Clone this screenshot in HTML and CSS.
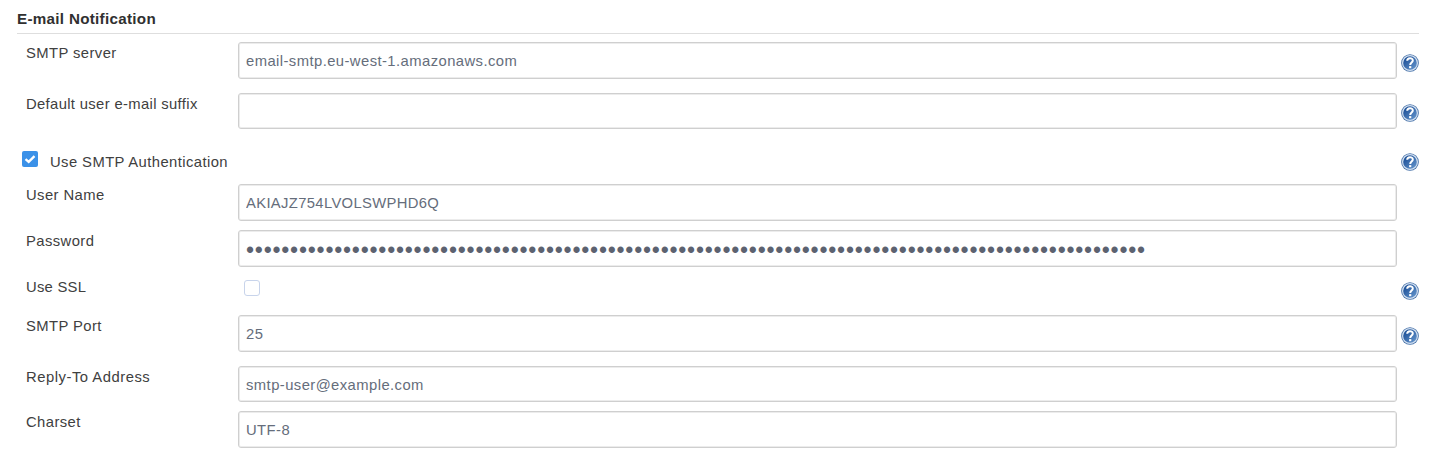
FILE: index.html
```html
<!DOCTYPE html>
<html lang="en">
<head>
<meta charset="utf-8">
<title>E-mail Notification</title>
<link rel="stylesheet" href="styles.css">
</head>
<body>
<svg width="0" height="0" class="defs">
  <defs>
    <linearGradient id="blue" x1="0" y1="0" x2="1" y2="1">
      <stop offset="0.2" stop-color="#20539a"/>
      <stop offset="1" stop-color="#6d9dd2"/>
    </linearGradient>
    <symbol id="help" viewBox="0 0 18 18">
      <circle cx="9" cy="9" r="8.8" fill="#4470a8"/>
      <circle cx="9" cy="9" r="7.4" fill="url(#blue)" stroke="#d3e0f0" stroke-width="1.2"/>
      <path d="M6.2 6.7C6.3 3.5 11.8 3.5 11.8 6.4C11.8 8.5 9.2 8.4 9.2 11" fill="none" stroke="#fff" stroke-width="2"/>
      <rect x="8.1" y="12.1" width="2.2" height="2.1" fill="#fff"/>
    </symbol>
  </defs>
</svg>
<form class="section">
  <h1 class="title">E-mail Notification</h1>
  <div class="row tall">
    <label class="label server" for="server">SMTP server</label>
    <input class="field host" id="server" value="email-smtp.eu-west-1.amazonaws.com">
    <svg class="help"><use href="#help"/></svg>
  </div>
  <div class="row suffix-row">
    <label class="label suffix" for="suffix">Default user e-mail suffix</label>
    <input class="field short" id="suffix">
    <svg class="help"><use href="#help"/></svg>
  </div>
  <div class="row auth-row">
    <label class="auth"><span class="check on"><svg viewBox="0 0 16 16"><path d="M3.5 8.1L6.7 10.9L12.5 5.1" fill="none" stroke="#fff" stroke-width="2.3"/></svg></span><span class="auth-text">Use SMTP Authentication</span></label>
    <svg class="help"><use href="#help"/></svg>
  </div>
  <div class="row">
    <label class="label user" for="user">User Name</label>
    <input class="field key" id="user" value="AKIAJZ754LVOLSWPHD6Q">
  </div>
  <div class="row">
    <label class="label pass" for="pass">Password</label>
    <input class="field secret" id="pass" value="••••••••••••••••••••••••••••••••••••••••••••••••••••••••••••••••••••••••••••••••••••••••••••••••••••••">
  </div>
  <div class="row ssl-row">
    <span class="label ssl">Use SSL</span>
    <span class="check off"></span>
    <svg class="help"><use href="#help"/></svg>
  </div>
  <div class="row tall">
    <label class="label port" for="port">SMTP Port</label>
    <input class="field number" id="port" value="25">
    <svg class="help"><use href="#help"/></svg>
  </div>
  <div class="row reply-row">
    <label class="label reply" for="reply">Reply-To Address</label>
    <input class="field short mail" id="reply" value="smtp-user@example.com">
  </div>
  <div class="row">
    <label class="label charset" for="charset">Charset</label>
    <input class="field utf" id="charset" value="UTF-8">
  </div>
</form>
</body>
</html>
```
FILE: styles.css
```css
* { box-sizing: border-box; }
body {
  margin: 0;
  background: #fff;
  overflow: hidden;
  color: #404040;
  font: 14.8px/20px "Liberation Sans", Arial, sans-serif;
  letter-spacing: 0.42px;
}
.defs { display: block; }
.section { width: 1402px; margin: 0 0 0 17px; }
.title {
  height: 34px;
  margin: 0 0 8px;
  padding-top: 9px;
  border-bottom: 1px solid #dedede;
  color: #303030;
  font-size: 15.2px;
  font-weight: bold;
  line-height: 20px;
  letter-spacing: 0.3px;
}
.row {
  display: grid;
  grid-template-columns: 212px 1159px 22px;
  align-items: start;
  height: 46px;
  padding-left: 9px;
}
.tall { height: 51px; }
.suffix-row { height: 57px; }
.auth-row { height: 34px; padding-left: 5px; grid-template-columns: 1379px 18px; }
.ssl-row { height: 39px; }
.reply-row { height: 45px; }
.label { padding-top: 1px; white-space: nowrap; }
.suffix { letter-spacing: 0.35px; }
.reply { letter-spacing: 0.52px; }
.ssl { letter-spacing: 0.25px; }
.field {
  width: 1159px;
  height: 37px;
  margin: 0;
  padding: 1px 7px 0;
  border: 1px solid #cfcfcf;
  border-radius: 3px;
  outline: 0;
  background: #fff;
  box-shadow: inset 0 0 0 1px #ececec;
  color: #656d7b;
  font: 14.8px "Liberation Sans", Arial, sans-serif;
  letter-spacing: 0.43px;
}
.short { height: 36px; }
.key { letter-spacing: 0.34px; }
.secret { padding-top: 3px; font-size: 23px; letter-spacing: 0.77px; color: #5c6270; }
.help { width: 18px; height: 18px; margin: 12px 0 0 4px; }
.suffix-row .help { margin-top: 11px; }
.auth-row .help { margin: 3px 0 0 0; }
.ssl-row .help { margin-top: 6px; }
.auth { display: flex; gap: 12px; }
.auth-text { padding-top: 2px; }
.check { width: 16px; height: 16px; border-radius: 2px; }
.check svg { display: block; }
.on { margin-top: 1px; background: #3b91e8; }
.off { margin: 4px 0 0 6px; border: 1px solid #c8d4eb; border-radius: 3px; }
```
